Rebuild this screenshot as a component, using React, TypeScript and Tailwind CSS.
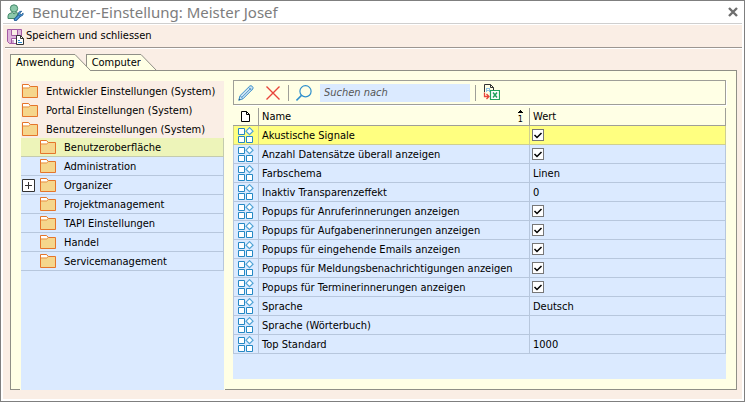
import React from "react";

const folders = [
  { name: "Entwickler Einstellungen (System)", level: 0 },
  { name: "Portal Einstellungen (System)", level: 0 },
  { name: "Benutzereinstellungen (System)", level: 0 },
  { name: "Benutzeroberfläche", level: 1, selected: true },
  { name: "Administration", level: 1 },
  { name: "Organizer", level: 1, expandable: true },
  { name: "Projektmanagement", level: 1 },
  { name: "TAPI Einstellungen", level: 1 },
  { name: "Handel", level: 1 },
  { name: "Servicemanagement", level: 1 },
];

const settings: { name: string; value: string | boolean }[] = [
  { name: "Akustische Signale", value: true },
  { name: "Anzahl Datensätze überall anzeigen", value: true },
  { name: "Farbschema", value: "Linen" },
  { name: "Inaktiv Transparenzeffekt", value: "0" },
  { name: "Popups für Anruferinnerungen anzeigen", value: true },
  { name: "Popups für Aufgabenerinnerungen anzeigen", value: true },
  { name: "Popups für eingehende Emails anzeigen", value: true },
  { name: "Popups für Meldungsbenachrichtigungen anzeigen", value: true },
  { name: "Popups für Terminerinnerungen anzeigen", value: true },
  { name: "Sprache", value: "Deutsch" },
  { name: "Sprache (Wörterbuch)", value: "" },
  { name: "Top Standard", value: "1000" },
];

const UserIcon = () => (
  <svg width="17" height="17" viewBox="0 0 17 17" fill="none">
    <path d="M1 14.500V12q0-2.500 3-3l1.500-.5L7 10l2-1.500 2 .8-2 5.200z" fill="#8cc9ab" stroke="#43896a" />
    <circle cx="7" cy="4.500" r="3.700" fill="#8cc9ab" stroke="#43896a" />
    <path d="M8.500 15.500l4-4" stroke="#245b91" strokeWidth="3.400" strokeLinecap="round" />
    <path d="M8.500 15.500l4-4" stroke="#4c9ddd" strokeWidth="1.600" strokeLinecap="round" />
    <path d="M14.800 7.300q-2.500-.5-3.300 1.400-.5 2 .8 3 1.500 1 3.200-.2.900-.9.600-2.400l-1.700 1.500-1.300-.4-.2-1.200z" fill="#4c9ddd" stroke="#245b91" strokeWidth=".8" />
  </svg>
);

const SaveIcon = () => (
  <svg width="17" height="17" viewBox="0 0 17 17" fill="none">
    <path d="M.5 1.500h14v14h-12l-2-2z" fill="#dfb6dc" stroke="#a35aa5" />
    <path d="M4.500 1.500h6v6h-6z" fill="#faeee5" stroke="#a35aa5" />
    <path d="M4.500 15.500v-5h5v5z" fill="#fff" stroke="#a35aa5" />
    <path d="M6 12v3" stroke="#a35aa5" />
    <path d="M9.500 7.500h4l3 3v6h-7z" fill="#fff" stroke="#333" />
    <path d="M13.500 7.500v3h3" stroke="#333" />
    <path d="M11 12.500h2M11 14.500h4" stroke="#2b8bd0" />
  </svg>
);

const CloseIcon = () => (
  <svg width="10" height="10" viewBox="0 0 10 10" stroke="#6e6e6e" fill="none">
    <path d="M1 1l8 8M9 1L1 9" strokeWidth="2.400" />
  </svg>
);

const FolderIcon = () => (
  <svg width="16" height="14" viewBox="0 0 16 14" fill="none" className="shrink-0">
    <path d="M.5 .5h6l2 2h7v11H.5z" fill="#f5d68c" stroke="#e5752b" />
    <path d="M1 1h5.300l1.500 1.500L6.500 3.500H1z" fill="#fff" />
    <path d="M1 4h5.500l2-1.500" stroke="#e5752b" strokeWidth=".7" />
  </svg>
);

const PencilIcon = () => (
  <svg width="16" height="16" viewBox="0 0 16 16" fill="none">
    <path d="M.8 15.200l1.200-4.500L11.800 1q1.200-.8 2.500.4t.5 2.600L5 13.800z" fill="#cfe4f2" stroke="#3d8fc9" />
    <path d="M2.500 11l2.300 2.600M4 12.200L12.800 3.300M10.500 2.300l3 3" stroke="#3d8fc9" strokeWidth=".9" />
    <path d="M.5 15.500l.8-2 1.300 1.200z" fill="#245b80" />
  </svg>
);

const DeleteIcon = () => (
  <svg width="14" height="14" viewBox="0 0 14 14" stroke="#e8443a" fill="none">
    <path d="M.5 .5l13 13M13.500 .5l-13 13" strokeWidth="1.400" />
  </svg>
);

const SearchIcon = () => (
  <svg width="16" height="16" viewBox="0 0 16 16" stroke="#2f8fcc" fill="none">
    <circle cx="9.500" cy="6.300" r="5.600" strokeWidth="1.200" />
    <path d="M5.500 10.400L.5 15.400" strokeWidth="1.500" />
  </svg>
);

const ExcelIcon = () => (
  <svg width="17" height="17" viewBox="0 0 17 17" fill="none">
    <path d="M1.500 8V.5h6l3 3V6" stroke="#333" />
    <path d="M7.500 .5v3h3" stroke="#333" />
    <path d="M3 4.500h4M3 6.500h4M3.500 4v4M6.500 4v4" stroke="#8cc4e8" />
    <path d="M1.500 8.500v4h4M3.500 10l2.500 2.500L3.500 15" stroke="#e8443a" strokeWidth="1.300" />
    <path d="M7.500 6.500h9v9h-9z" fill="#fff" stroke="#21a35c" strokeWidth="1.200" />
    <path d="M10 8.500l4 5M14 8.500l-4 5" stroke="#21a35c" strokeWidth="1.500" />
  </svg>
);

const PageIcon = () => (
  <svg width="9" height="11" viewBox="0 0 9 11" stroke="#000" fill="none" className="mx-auto">
    <path d="M.5 .5h5l3 3v7h-8z" fill="#fff" />
    <path d="M5.500 .5v3h3" />
  </svg>
);

const ItemIcon = () => (
  <svg width="16" height="16" viewBox="0 0 16 16" stroke="#2488c4" fill="#fff" className="mx-auto">
    <path d="M.5 1.500h6v6h-6zM.5 9.500h6v6h-6zM8.500 9.500h6v6h-6z" />
    <path d="M11.500 .7l3.500 3.500-3.500 3.500L8 4.200z" stroke="#4fa3d6" strokeWidth="1.200" />
  </svg>
);

const SortIcon = () => (
  <svg width="5" height="3" viewBox="0 0 5 3" fill="#000">
    <path d="M2 0h1v1h1v1h1v1H0V2h1V1h1z" />
  </svg>
);

const TabSlant = () => (
  <svg width="16" height="17" viewBox="0 0 16 17" fill="none">
    <path d="M0 .5L15.500 17H0z" fill="#ffffe5" />
    <path d="M0 .5l15.500 16" stroke="#8f8f86" />
  </svg>
);

const Tab = ({ label, active }: { label: string; active?: boolean }) => (
  <button
    role="tab"
    aria-selected={!!active}
    className={active ? "relative z-10 flex h-[17px]" : "-ml-[5px] flex h-4"}
  >
    <span className="h-full border-l border-t border-[#8f8f86] bg-[#ffffe5] pl-[5px] leading-4 whitespace-nowrap">
      {label}
    </span>
    <TabSlant />
  </button>
);

const Checkbox = ({ label }: { label: string }) => (
  <span className="relative block size-3">
    <input
      type="checkbox"
      defaultChecked
      aria-label={label}
      className="peer block size-3 appearance-none border border-[#777] bg-white"
    />
    <svg
      viewBox="0 0 12 12"
      className="pointer-events-none absolute inset-0 hidden size-3 peer-checked:block"
      fill="none"
      stroke="#000"
    >
      <path d="M2.500 6L5 8.500 9.500 4" strokeWidth="1.500" />
    </svg>
  </span>
);

const Separator = () => <span className="h-4 w-px bg-[#9f9f98]" />;

const App: React.FC = () => {
  return (
    <main className="flex min-h-screen flex-col border border-[#7f7f7f] bg-white px-0.5 pb-0.5 font-['DejaVu_Sans_Condensed','Noto_Sans',sans-serif] text-[11px] text-black">
      {/* Title bar */}
      <header className="flex h-[23px] items-center border-b border-[#cfcfcf] pl-1 pr-1">
        <UserIcon />
        <h1 className="ml-2 flex-1 font-['Noto_Sans',sans-serif] text-[15px] leading-5 text-[#7d7d7d]">
          Benutzer-Einstellung: Meister Josef
        </h1>
        <button aria-label="Schliessen">
          <CloseIcon />
        </button>
      </header>

      <div className="mt-px flex flex-1 flex-col bg-[#faeee5]">
        <div className="ml-0.5 flex h-6 items-center border-b border-white">
          <div className="flex h-full flex-1 items-center border-b border-[#9c9691] pl-0.5">
            <button className="flex items-center gap-0.5">
              <SaveIcon />
              <span className="pt-px">Speichern und schliessen</span>
            </button>
          </div>
        </div>

        <div className="flex flex-1 flex-col pb-[9px] pl-[7px] pr-[5px] pt-[5px]">
          <div role="tablist" className="flex h-4 items-start">
            <Tab label="Anwendung" active />
            <Tab label="Computer" />
          </div>

          <div className="flex flex-1 border border-[#8f8f86] bg-[#ffffe5] pl-[9px] pr-2.5 pt-[9px]">
            {/* Folder tree */}
            <nav className="-mb-px mt-px flex w-[205px] shrink-0 bg-[#ffffe5] px-px">
              <ul className="min-w-0 flex-1 bg-[#dbeaff]">
                {folders.map((folder) => (
                  <li
                    key={folder.name}
                    className={
                      folder.level === 0
                        ? "bg-[#faeee5]"
                        : folder.selected
                          ? "border-b border-r border-[#c4cbae] bg-[#edf4b9]"
                          : "border-b border-r border-[#b7c7dd]"
                    }
                  >
                    <button
                      className={
                        folder.level === 0
                          ? "flex h-[19px] w-full items-center pl-px"
                          : "flex h-[18px] w-full items-center pl-px"
                      }
                    >
                      {folder.level === 1 && (
                        <span className="w-[18px] shrink-0">
                          {folder.expandable && (
                            <svg width="13" height="13" viewBox="0 0 13 13" stroke="#333" fill="#fff">
                              <path d="M.5 .5h12v12H.5zM3 6.500h7M6.500 3v7" />
                            </svg>
                          )}
                        </span>
                      )}
                      <FolderIcon />
                      <span className="ml-2 pt-px leading-[17px] whitespace-nowrap">{folder.name}</span>
                    </button>
                  </li>
                ))}
              </ul>
            </nav>

            {/* Settings list */}
            <section className="mb-2.5 ml-2 flex min-w-0 flex-1 flex-col">
              <div className="flex h-[25px] items-center border border-[#9f9f98] pl-1 shadow-[1px_1px_0_#fff]">
                <button aria-label="Bearbeiten">
                  <PencilIcon />
                </button>
                <button aria-label="Löschen" className="ml-3 mr-2">
                  <DeleteIcon />
                </button>
                <Separator />
                <label htmlFor="search" aria-label="Suchen" className="ml-[7px] mr-2">
                  <SearchIcon />
                </label>
                <input
                  id="search"
                  type="text"
                  placeholder="Suchen nach"
                  className="mr-[5px] h-[18px] w-[150px] bg-[#dbeaff] px-1 italic outline-none placeholder:text-[#555]"
                />
                <Separator />
                <button aria-label="Excel Export" className="ml-[7px]">
                  <ExcelIcon />
                </button>
              </div>

              <div className="mt-[3px] flex-1 bg-[#dbeaff]">
                <table className="w-full table-fixed border-separate border-spacing-0 text-left">
                  <colgroup>
                    <col className="w-[26px]" />
                    <col className="w-[271px]" />
                    <col />
                  </colgroup>
                  <thead>
                    <tr className="h-[18px] bg-[#ffffe5]">
                      <th aria-label="Typ" className="border-b border-r border-[#9f9f98] p-0">
                        <PageIcon />
                      </th>
                      <th className="border-b border-r border-[#9f9f98] p-0 font-normal">
                        <div className="flex items-center justify-between pl-[3px] pr-1.5 leading-[17px]">
                          Name
                          <span className="flex flex-col items-center gap-0.5 text-[9px] leading-2">
                            <SortIcon />1
                          </span>
                        </div>
                      </th>
                      <th className="border-b border-r border-[#9f9f98] p-0 pl-[3px] font-normal leading-[17px]">
                        Wert
                      </th>
                    </tr>
                  </thead>
                  <tbody>
                    {settings.map((setting, index) => (
                      <tr
                        key={setting.name}
                        className={
                          index === 0
                            ? "h-[19px] bg-[#ffff80] [&>td]:border-[#cfcf90]"
                            : "h-[19px] [&>td]:border-[#b7c7dd]"
                        }
                      >
                        <td className="border-b border-l border-r p-0">
                          <ItemIcon />
                        </td>
                        <td className="overflow-hidden border-b border-r p-0 pl-[3px] pt-px leading-[17px] whitespace-nowrap">
                          {setting.name}
                        </td>
                        {setting.value === true ? (
                          <td className="border-b border-r p-0 pl-0.5">
                            <Checkbox label={setting.name} />
                          </td>
                        ) : (
                          <td className="border-b border-r p-0 pl-[3px] pt-px leading-[17px]">
                            {setting.value}
                          </td>
                        )}
                      </tr>
                    ))}
                  </tbody>
                </table>
              </div>
            </section>
          </div>
        </div>
      </div>
    </main>
  );
};

export default App;
